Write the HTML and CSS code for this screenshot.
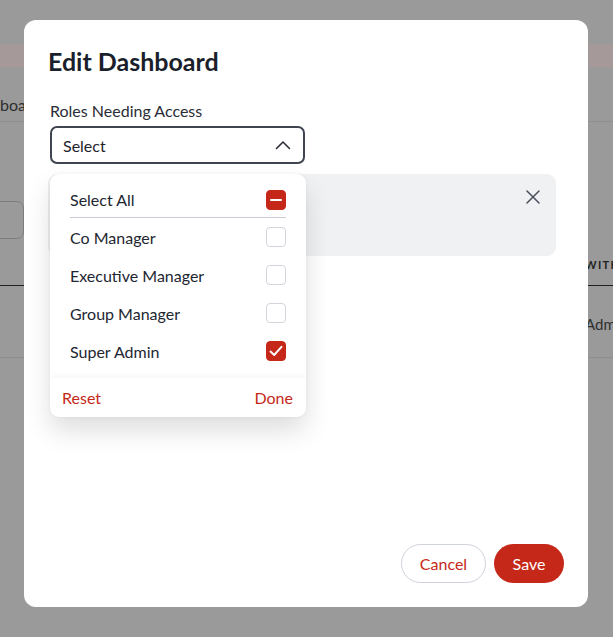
FILE: index.html
```html
<!DOCTYPE html>
<html lang="en">
<head>
<meta charset="utf-8">
<title>Edit Dashboard</title>
<link rel="stylesheet" href="styles.css">
</head>
<body>
<div class="page">
  <div class="topbar"></div>
  <div class="band"></div>
  <div class="crumbs"><span class="crumb-text">boards</span></div>
  <div class="search-row"><div class="search-box"></div></div>
  <div class="table-head"><span class="col-right head-text">WITH</span></div>
  <div class="table-row"><span class="col-right cell-text">Admi</span></div>
</div>

<div class="modal" role="dialog">
  <h1 class="modal-title">Edit Dashboard</h1>
  <div class="field">
    <label class="field-label">Roles Needing Access</label>
    <div class="select">
      <span>Select</span>
      <svg class="chevron" width="16" height="10" viewBox="0 0 16 10"><path d="M1.5 8.5 L8 2 L14.5 8.5" fill="none" stroke="#2b2f38" stroke-width="1.6" stroke-linecap="round" stroke-linejoin="round"/></svg>
    </div>
    <div class="notice">
      <svg class="close" width="14" height="14" viewBox="0 0 14 14"><path d="M1 1 L13 13 M13 1 L1 13" fill="none" stroke="#4a4f59" stroke-width="1.5" stroke-linecap="round"/></svg>
    </div>
    <div class="menu">
      <div class="menu-list">
        <div class="opt opt-all">
          <span>Select All</span>
          <span class="box box-on"><svg width="14" height="14" viewBox="0 0 14 14"><path d="M2 7 H12" stroke="#fff" stroke-width="2.2" stroke-linecap="round"/></svg></span>
        </div>
        <div class="divider"></div>
        <div class="opt"><span>Co Manager</span><span class="box"></span></div>
        <div class="opt"><span>Executive Manager</span><span class="box"></span></div>
        <div class="opt"><span>Group Manager</span><span class="box"></span></div>
        <div class="opt"><span>Super Admin</span><span class="box box-on"><svg width="16" height="16" viewBox="0 0 16 16"><path d="M2.5 8.5 L6.2 12 L13.5 3.8" fill="none" stroke="#fff" stroke-width="1.9" stroke-linecap="round" stroke-linejoin="round"/></svg></span></div>
      </div>
      <div class="menu-foot">
        <span class="link">Reset</span>
        <span class="link">Done</span>
      </div>
    </div>
  </div>
  <div class="actions">
    <button class="btn btn-ghost">Cancel</button>
    <button class="btn btn-primary">Save</button>
  </div>
</div>
</body>
</html>
```

FILE: styles.css
```css
* { box-sizing: border-box; }
html, body { margin: 0; padding: 0; }
body {
  width: 613px;
  height: 637px;
  overflow: hidden;
  background: #9a9a9a;
  font-family: "Lato", "Noto Sans", sans-serif;
  position: relative;
}

/* background page (dimmed) */
.page { display: flex; flex-direction: column; }
.topbar { height: 44px; }
.band { height: 23px; background: #a5999a; }
.crumbs {
  height: 55px;
  display: flex;
  align-items: center;
  padding-top: 20px;
  border-bottom: 1px solid #8f8f8f;
}
.crumb-text { font-size: 16px; color: #2e2e2e; }
.search-row { height: 118px; padding-top: 79px; }
.search-box {
  width: 34px; height: 38px;
  margin-left: -10px;
  border: 1px solid #7d7d7d;
  border-radius: 7px;
}
.table-head {
  height: 46px;
  display: flex;
  align-items: center;
  padding-top: 4px;
  border-bottom: 1px solid #1f1f1f;
}
.table-row {
  height: 72px;
  display: flex;
  align-items: center;
  padding-top: 4px;
  border-bottom: 1px solid #8e8e8e;
}
.col-right { margin-left: 585px; white-space: nowrap; }
.head-text { font-size: 11px; font-weight: 700; letter-spacing: 1.4px; color: #222; }
.cell-text { font-size: 15px; color: #2e2e2e; }

/* modal */
.modal {
  position: absolute;
  left: 24px; top: 20px;
  width: 564px; height: 587px;
  background: #fff;
  border-radius: 12px;
  padding: 26px 24px 24px 24px;
  display: flex;
  flex-direction: column;
}
.modal-title {
  margin: 0;
  font-size: 25px;
  line-height: 30px;
  font-weight: 700;
  color: #1b1f2b;
}
.field {
  position: relative;
  margin-top: 25px;
  padding-left: 2px;
}
.field-label {
  display: block;
  font-size: 16px;
  line-height: 20px;
  color: #2a2d35;
}
.select {
  margin-top: 5px;
  width: 255px;
  height: 38px;
  border: 2px solid #3f4450;
  border-radius: 7px;
  display: flex;
  align-items: center;
  justify-content: space-between;
  padding: 0 12px 0 11px;
  font-size: 16px;
  color: #1f232c;
}
.chevron { display: block; }
.notice {
  margin-top: 10px;
  margin-left: -2px;
  width: 508px;
  height: 82px;
  background: #f0f1f3;
  border-radius: 9px;
  display: flex;
  justify-content: flex-end;
  align-items: flex-start;
  padding: 16px 16px 0 0;
}
.close { display: block; }

/* dropdown menu */
.menu {
  position: absolute;
  left: 2px;
  top: 73px;
  width: 256px;
  background: #fff;
  border-radius: 9px;
  box-shadow: 0 14px 26px rgba(0,0,0,0.13), 0 0 4px rgba(0,0,0,0.05);
  overflow: hidden;
}
.menu-list { padding: 8px 20px 8px 20px; }
.opt {
  height: 38px;
  display: flex;
  align-items: center;
  justify-content: space-between;
  font-size: 16px;
  color: #222631;
}
.opt-all { height: 35px; }
.divider { height: 1px; background: #c9ccd3; }
.box {
  width: 20px; height: 20px;
  border: 1.5px solid #d2d5db;
  border-radius: 4px;
  display: flex;
  align-items: center;
  justify-content: center;
}
.box-on { background: #c52818; border-color: #c52818; }
.box svg { display: block; }
.menu-foot {
  height: 39px;
  display: flex;
  align-items: center;
  justify-content: space-between;
  padding: 0 13px 0 12px;
  box-shadow: 0 -3px 6px rgba(0,0,0,0.03);
}
.link { font-size: 16px; color: #c52818; }

/* footer actions */
.actions {
  margin-top: auto;
  display: flex;
  justify-content: flex-end;
  gap: 8px;
}
.btn {
  height: 39px;
  border-radius: 20px;
  font-family: inherit;
  font-size: 16px;
  cursor: pointer;
}
.btn-ghost {
  width: 85px;
  background: #fff;
  border: 1px solid #cfd3da;
  color: #c52818;
}
.btn-primary {
  width: 70px;
  background: #c52818;
  border: none;
  color: #fff;
}
```
